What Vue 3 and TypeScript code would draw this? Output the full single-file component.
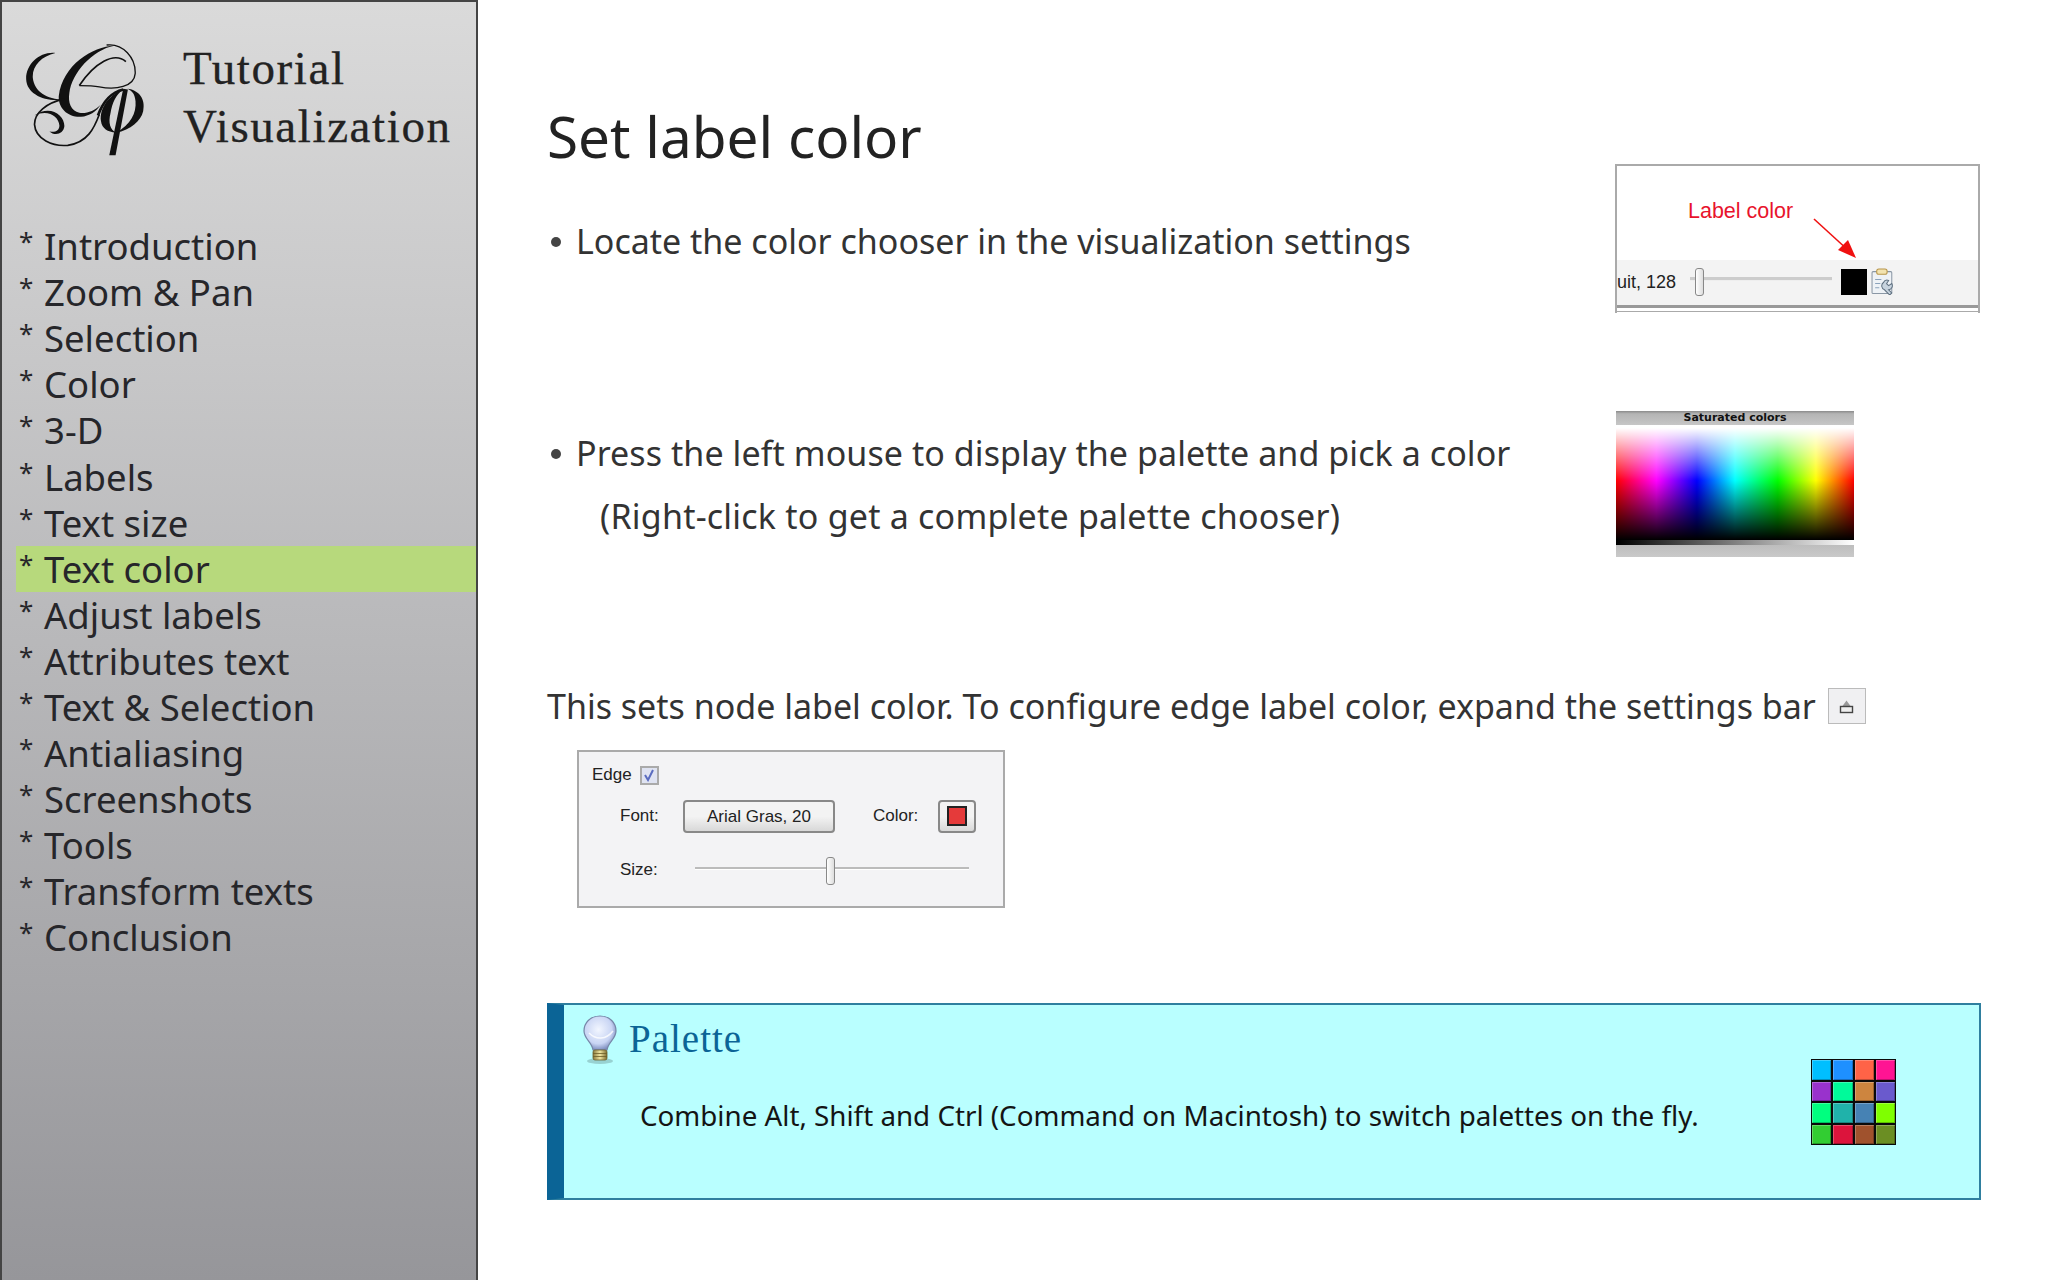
<script setup lang="ts">
const items: string[] = ['Introduction','Zoom & Pan','Selection','Color','3-D','Labels','Text size','Text color','Adjust labels','Attributes text','Text & Selection','Antialiasing','Screenshots','Tools','Transform texts','Conclusion']
const active = 'Text color'
const swatches: string[] = ['#00bfff','#1e90ff','#ff6347','#ff1493','#9932cc','#00fa9a','#cd853f','#6a5acd','#00ff7f','#20b2aa','#4682b4','#7fff00','#32cd32','#dc143c','#a0522d','#6b8e23']
</script>

<template>
  <div class="page">
    <aside class="side">
      <header class="brand">
        <svg class="logo" viewBox="80 130 360 340" width="120" height="113" fill="#111" stroke="none">
          <path d="M168 160C120 155 78 195 80 240C82 285 140 310 195 300C140 300 105 275 100 235C97 200 125 170 168 160Z"/>
          <path d="M345 138C280 140 190 195 178 290C176 325 205 354 245 352C270 350 290 337 305 315C285 335 262 343 240 340C215 335 205 310 210 280C217 220 280 150 345 138Z"/>
          <path d="M105 348C150 315 195 345 195 380C193 405 165 410 150 396C165 400 180 395 180 378C178 350 145 328 105 348Z"/>
          <path d="M385 268C420 272 440 300 432 335C425 365 395 390 350 400C395 375 412 340 409 305C407 285 400 275 385 268Z"/>
          <path d="M370 272C330 285 300 325 305 365C308 388 325 398 350 400C333 390 326 372 334 340C339 310 350 285 370 272Z"/>
          <path d="M372 268L386 270L349 468L330 468Z"/>
          <g fill="none" stroke="#111">
            <path d="M322 136C372 130 410 175 408 222C405 262 350 272 300 262C280 258 258 258 240 258" stroke-width="4"/>
            <path d="M380 186C345 155 285 190 240 258" stroke-width="5"/>
            <path d="M195 298C140 310 105 340 105 375C108 420 160 442 205 438C265 430 285 385 300 345" stroke-width="5"/>
            <path d="M296 348C310 310 330 280 372 270" stroke-width="8"/>
          </g>
        </svg>
        <h1 class="brand-title">Tutorial<br>Visualization</h1>
      </header>
      <ul class="nav">
        <li v-for="item in items" :key="item" :class="['nav-item', { on: item === active }]">
          <span class="star">*</span><span>{{ item }}</span>
        </li>
      </ul>
    </aside>

    <main class="main">
      <h2 class="title">Set label color</h2>

      <section class="row row-one">
        <p class="bullet"><span class="dot"></span>Locate the color chooser in the visualization settings</p>
        <figure class="shot-label">
          <div class="label-top">
            <span class="label-red">Label color</span>
            <svg class="label-arrow" width="46" height="42" viewBox="0 0 46 42">
              <path d="M1 1L36 33" stroke="#f01010" stroke-width="1.6"/>
              <path d="M43 40L25 32L35 22Z" fill="#f01010"/>
            </svg>
          </div>
          <div class="label-bar">
            <span class="label-val">uit, 128</span>
            <span class="mini-slider"><i class="mini-track"></i><i class="thumb thumb-a"></i></span>
            <span class="black"></span>
            <svg class="clip" width="27" height="27" viewBox="0 0 26 26">
              <rect x="1" y="3.5" width="19" height="21" rx="1" fill="#eef2f6" stroke="#8a97a5"/>
              <rect x="5.5" y="1" width="10" height="5" rx="2" fill="#f2e3b0" stroke="#b8964a"/>
              <path d="M4 11h6M4 15h5M4 19h4" stroke="#8aa2bb"/>
              <path d="M12 14a4 4 0 0 1 5-2l-2 3 2 2 3-2a4 4 0 0 1-3 6l3 3-2 2-5-5a4 4 0 0 1-1-7z" fill="#c7d3de" stroke="#5f7080"/>
            </svg>
          </div>
        </figure>
      </section>

      <section class="row row-two">
        <div class="bullet-block">
          <p class="bullet wide-a"><span class="dot"></span>Press the left mouse to display the palette and pick a color</p>
          <p class="bullet sub">(Right-click to get a complete palette chooser)</p>
        </div>
        <figure class="shot-palette">
          <div class="pal-head">Saturated colors</div>
          <div class="pal-spectrum"></div>
          <div class="pal-strip"></div>
          <div class="pal-foot"></div>
        </figure>
      </section>

      <p class="para">
        <span>This sets node label color. To configure edge label color, expand the settings bar</span>
        <span class="expand">
          <svg width="15" height="15" viewBox="0 0 15 15">
            <path d="M3.5 7L7.5 1.5L11.5 7Z" fill="#999"/>
            <rect x="1.5" y="7.5" width="12" height="6" fill="#eee" stroke="#444" stroke-width="1.4"/>
          </svg>
        </span>
      </p>

      <figure class="edge">
        <div class="edge-head">
          <span>Edge</span>
          <span class="check">
            <svg width="14" height="14" viewBox="0 0 14 14"><path d="M3 7L6 12L11 2" fill="none" stroke="#5a6cc0" stroke-width="2"/></svg>
          </span>
        </div>
        <div class="edge-row">
          <span class="edge-lab">Font:</span>
          <span class="font-btn">Arial Gras, 20</span>
          <span class="edge-color">Color:</span>
          <span class="color-btn"><i class="red"></i></span>
        </div>
        <div class="edge-row size-row">
          <span class="edge-lab">Size:</span>
          <span class="size-slider"><i class="size-track"></i><i class="thumb thumb-b"></i></span>
        </div>
      </figure>

      <section class="note">
        <div class="note-body">
          <div class="note-head">
            <svg class="bulb" width="36" height="50" viewBox="0 0 36 50">
              <defs>
                <radialGradient id="glass" cx="45%" cy="40%" r="60%">
                  <stop offset="0" stop-color="#f2f6ff"/>
                  <stop offset="0.7" stop-color="#c9d5f4"/>
                  <stop offset="1" stop-color="#7f8fc0"/>
                </radialGradient>
                <linearGradient id="base" x1="0" x2="1" y1="0" y2="0">
                  <stop offset="0" stop-color="#8a7a3c"/>
                  <stop offset="0.5" stop-color="#efe5a0"/>
                  <stop offset="1" stop-color="#7c6c30"/>
                </linearGradient>
              </defs>
              <ellipse cx="18" cy="46" rx="13" ry="3" fill="#6f9c9c" opacity="0.45"/>
              <path d="M18 1C8 1 2 8 2 16C2 24 10 27 11 35H25C26 27 34 24 34 16C34 8 28 1 18 1Z" fill="url(#glass)" stroke="#7787a8" stroke-width="1.2"/>
              <path d="M7 18C14 25 24 25 31 16" fill="none" stroke="#fff" stroke-width="1.5" opacity="0.8"/>
              <rect x="11" y="35" width="14" height="10" rx="2" fill="url(#base)" stroke="#6c5f2a" stroke-width="0.8"/>
              <path d="M11 38.5H25M11 41.5H25" stroke="#6c5f2a" stroke-width="0.8"/>
            </svg>
            <h3 class="note-title">Palette</h3>
          </div>
          <div class="note-main">
            <p class="note-text">Combine Alt, Shift and Ctrl (Command on Macintosh) to switch palettes on the fly.</p>
            <div class="swatches">
              <i v-for="c in swatches" :key="c" class="swatch" :style="{ backgroundColor: c }"></i>
            </div>
          </div>
        </div>
      </section>
    </main>
  </div>
</template>

<style>
html, body { margin: 0; background: #fff; }
</style>

<style scoped>
.page { width: 2048px; height: 1280px; display: flex; overflow: hidden; background: #fff; font-family: "Noto Sans", "DejaVu Sans", sans-serif; color: #2b2b2b; }
.side { width: 478px; height: 1280px; box-sizing: border-box; border: 2px solid #444; border-bottom: 0; background: linear-gradient(#dadada, #96969a); flex: none; }
.brand { display: flex; height: 221px; box-sizing: border-box; padding: 41px 0 0 24px; }
.logo { flex: none; }
.brand-title { margin: -3px 0 0 37px; font: 400 47px/57.5px "Liberation Serif", serif; letter-spacing: 1.6px; color: #222; -webkit-text-stroke: 0.3px #222; }
.nav { list-style: none; margin: 0; padding: 0 0 0 14px; }
.nav-item { height: 46.1px; display: flex; align-items: center; font-size: 36.5px; line-height: 46px; color: #26262a; padding-left: 4px; white-space: nowrap; }
.nav-item.on { background: #b7d97c; }
.star { width: 25px; font-size: 26px; margin-top: -10px; margin-left: -1px; flex: none; }

.main { width: 1434px; margin-left: 69px; flex: none; }
.title { margin: 0; height: 164px; box-sizing: border-box; padding-top: 96px; font-size: 56.7px; line-height: 80px; font-weight: 400; color: #222; }
.row { display: grid; grid-template-columns: 1068px 1fr; }
.row-one { height: 247px; }
.row-two { height: 271px; }
.bullet { margin: 0; font-size: 34px; line-height: 63px; color: #333; white-space: nowrap; display: flex; align-items: center; padding-left: 4px; }
.row-one .bullet { height: 63px; margin-top: 46px; }
.bullet-block { padding-top: 11px; }
.wide-a { letter-spacing: 0.08px; }
.sub { padding-left: 53px; letter-spacing: 0.22px; }
.dot { width: 10px; height: 10px; border-radius: 50%; background: #444; margin-right: 15px; flex: none; }

.shot-label { margin: 0; width: 365px; height: 149px; box-sizing: border-box; border: 2px solid #aaa; border-bottom: 0; background: #fff; display: flex; flex-direction: column; position: relative; font-family: "Liberation Sans", sans-serif; }
.label-top { height: 94px; position: relative; flex: none; }
.label-red { position: absolute; left: 71px; top: 33px; font-size: 21.5px; color: #e8132c; }
.label-arrow { position: absolute; left: 196px; top: 52px; }
.label-bar { height: 48px; flex: none; background: #f3f3f3; border-bottom: 3px solid #999; box-shadow: 0 3px 0 #fff, 0 4px 0 #aaa; display: flex; align-items: center; font-size: 18px; color: #222; box-sizing: border-box; }
.label-val { width: 73px; overflow: hidden; white-space: nowrap; flex: none; }
.mini-slider { width: 142px; height: 30px; position: relative; flex: none; margin-right: 9px; }
.mini-track { position: absolute; left: 0; right: 0; top: 9px; height: 3px; background: #ccc; border-bottom: 1px solid #eee; }
.thumb { position: absolute; width: 7px; border: 1px solid #888; border-radius: 3px; background: linear-gradient(90deg, #fff, #ddd); }
.thumb-a { left: 5px; top: 0; height: 26px; }
.black { width: 26px; height: 26px; background: #000; flex: none; margin-right: 4px; margin-top: -2px; }
.clip { flex: none; margin-top: -3px; }

.shot-palette { margin: 0 0 0 1px; width: 238px; }
.pal-head { height: 14px; background: linear-gradient(#8a8a8a, #b4b4b4 20%, #c6c6c6); font: 700 11px/14px "DejaVu Sans", sans-serif; color: #111; text-align: center; margin-bottom: 3px; }
.pal-spectrum { height: 112px; background: linear-gradient(rgba(255,255,255,1), rgba(255,255,255,0) 47%, rgba(0,0,0,0) 47%, #000 100%), linear-gradient(90deg, #f00, #f0f 17%, #00f 34%, #0ff 50%, #0f0 68%, #ff0 84%, #f00); }
.pal-strip { height: 5px; background: linear-gradient(90deg, #000, #fff); }
.pal-foot { height: 12px; background: linear-gradient(#bdbdbd, #c9c9c9); }

.para { margin: 0; height: 48px; display: flex; align-items: center; font-size: 34px; color: #333; white-space: nowrap; }
.expand { width: 38px; height: 36px; margin-left: 12px; border: 1px solid #bbb; background: #f0f0f2; display: flex; align-items: center; justify-content: center; box-sizing: border-box; }

.edge { margin: 20px 0 0 30px; width: 428px; height: 158px; box-sizing: border-box; border: 2px solid #aaa; background: #f3f3f5; padding: 11px 0 0 13px; font: 17px/24px "Liberation Sans", sans-serif; color: #222; }
.edge-head { display: flex; align-items: center; height: 24px; }
.check { width: 19px; height: 19px; margin-left: 8px; border: 2px solid #aaa; background: #dfe3f2; box-sizing: border-box; display: flex; align-items: center; justify-content: center; }
.edge-row { display: flex; align-items: center; height: 34px; margin-top: 12px; padding-left: 28px; }
.edge-lab { width: 63px; flex: none; }
.font-btn { width: 152px; height: 33px; box-sizing: border-box; border: 2px solid #888; border-radius: 4px; background: linear-gradient(#f3f3f3 50%, #d8d8d8); text-align: center; line-height: 29px; flex: none; }
.edge-color { margin-left: 38px; width: 65px; flex: none; }
.color-btn { width: 38px; height: 33px; box-sizing: border-box; border: 2px solid #888; border-radius: 4px; background: linear-gradient(#f3f3f3 50%, #d8d8d8); display: flex; align-items: center; justify-content: center; }
.red { width: 20px; height: 20px; box-sizing: border-box; background: #e53a3a; border: 2px solid #222; }
.size-row { margin-top: 20px; }
.size-slider { width: 274px; height: 30px; position: relative; margin-left: 12px; }
.size-track { position: absolute; left: 0; right: 0; top: 12px; height: 2px; background: #bbb; border-bottom: 1px solid #fff; }
.thumb-b { left: 131px; top: 2px; height: 26px; }

.note { margin-top: 95px; width: 1434px; height: 197px; box-sizing: border-box; border: 2px solid #2f7f9f; border-left: 17px solid #0b6496; background: #b9ffff; }
.note-body { padding: 10px 0 0 18px; }
.note-head { display: flex; align-items: center; height: 50px; }
.bulb { flex: none; }
.note-title { margin: -2px 0 0 11px; font: 400 39px/50px "Liberation Serif", serif; letter-spacing: 1px; color: #0b6496; }
.note-main { display: flex; align-items: flex-start; height: 100px; }
.note-text { margin: 30px 0 0 58px; width: 1171px; font-size: 27.75px; line-height: 40px; color: #141414; white-space: nowrap; flex: none; }
.swatches { width: 85px; height: 86px; display: grid; grid-template-columns: repeat(4, 1fr); grid-template-rows: repeat(4, 1fr); gap: 2px; padding: 1px; box-sizing: border-box; background: #0a0a0a; margin-top: -6px; }
.swatch { display: block; box-shadow: inset 1px 1px 0 rgba(255,255,255,0.25), inset -1px -1px 0 rgba(0,0,0,0.25); }
</style>
